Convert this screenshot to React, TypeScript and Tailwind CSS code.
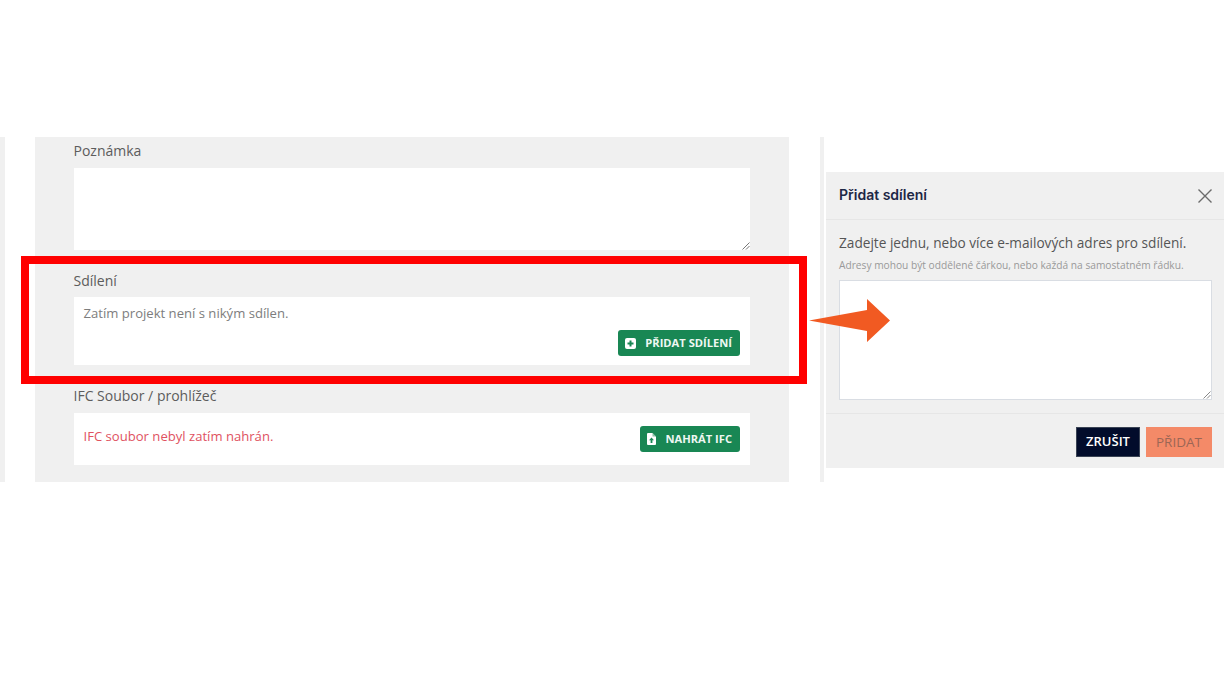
import React from "react";

function PlusIcon() {
  return (
    <svg width="11" height="11" viewBox="0 0 11 11" className="shrink-0">
      <rect width="11" height="11" rx="2" fill="#fff" />
      <path d="M5.5 2.5v6M2.5 5.5h6" stroke="#198754" strokeWidth="2" />
    </svg>
  );
}

function FileIcon() {
  return (
    <svg width="9" height="12" viewBox="0 0 9 12" className="shrink-0">
      <path d="M1 0h4.5L9 3.5V11a1 1 0 0 1-1 1H1a1 1 0 0 1-1-1V1a1 1 0 0 1 1-1z" fill="#fff" />
      <path d="M4.5 4.5L7 7.2H5.4V10H3.6V7.2H2z" fill="#198754" />
      <path d="M5.5 0v3.5H9z" fill="#198754" opacity="0.5" />
    </svg>
  );
}

function Label({ children, className }: { children: React.ReactNode; className: string }) {
  return <div className={`-ml-[0.5px] text-[14px] leading-5 text-[#5c5c5c] ${className}`}>{children}</div>;
}

function GreenButton({ icon, children }: { icon: React.ReactNode; children: React.ReactNode }) {
  return (
    <button className="flex h-[26px] items-center gap-[9px] rounded-[3px] bg-[#198754] pl-[7px] pr-[8px] text-[11.15px] font-bold text-[#eef7f2]">
      {icon}
      <span>{children}</span>
    </button>
  );
}

export default function App() {
  return (
    <div
      className="relative h-[689px] w-[1224px] overflow-hidden bg-white"
      style={{ fontFamily: '"Open Sans", "Noto Sans", sans-serif' }}
    >
      <div className="flex pt-[137px]">
        <div className="h-[345px] w-[5px] bg-[#f0f0f0]" />
        <div className="ml-[30px] h-[345px] w-[754px] bg-[#f0f0f0] px-[39px]">
          <Label className="mt-[4px] mb-[7px]">Poznámka</Label>
          <div className="relative h-[82px] bg-white">
            <svg width="8" height="8" viewBox="0 0 8 8" className="absolute right-0 bottom-0">
              <path d="M7.5 0.5L0.5 7.5M7.5 4L4 7.5" stroke="#777" strokeWidth="1" />
            </svg>
          </div>
          <Label className="mt-[21px] mb-[6px]">Sdílení</Label>
          <div className="flex h-[68px] flex-col bg-white pt-[6px] pr-[10px] pb-[9px] pl-[9.5px]">
            <div className="text-[13.1px] leading-5 text-[#7d7d7d]">Zatím projekt není s nikým sdílen.</div>
            <div className="mt-auto flex justify-end">
              <GreenButton icon={<PlusIcon />}>PŘIDAT SDÍLENÍ</GreenButton>
            </div>
          </div>
          <Label className="mt-[21px] mb-[7px]">IFC Soubor / prohlížeč</Label>
          <div className="flex h-[52px] items-start justify-between bg-white pt-[13px] pr-[10px] pl-[9.5px]">
            <div className="text-[13.1px] leading-5 text-[#e0525f]">IFC soubor nebyl zatím nahrán.</div>
            <GreenButton icon={<FileIcon />}>NAHRÁT IFC</GreenButton>
          </div>
        </div>
        <div className="ml-[31px] h-[345px] w-[4px] bg-[#f0f0f0]" />
        <div className="mt-[35px] ml-[2px] flex h-[296px] w-[398px] flex-col bg-[#f0f0f0]">
          <div className="flex h-[48px] shrink-0 items-center justify-between border-b border-[#e6e6e6] pr-[11px] pb-[3px] pl-[13px]">
            <span
              className="text-[14px] font-semibold text-[#1d2745]"
              style={{ fontFamily: 'Inter, "Open Sans", sans-serif' }}
            >
              Přidat sdílení
            </span>
            <svg width="16" height="16" viewBox="0 0 16 16" className="mt-[3px]">
              <path d="M1.5 1.5l13 13M14.5 1.5l-13 13" stroke="#6b6b6b" strokeWidth="1.4" />
            </svg>
          </div>
          <div className="flex flex-1 flex-col border-b border-[#e6e6e6] pr-[12px] pl-[13px]">
            <div className="mt-[13px] text-[13.65px] leading-5 text-[#555]">
              Zadejte jednu, nebo více e-mailových adres pro sdílení.
            </div>
            <div className="mt-[5px] text-[10.2px] leading-[14px] text-[#999]">
              Adresy mohou být oddělené čárkou, nebo každá na samostatném řádku.
            </div>
            <div className="relative mt-[8px] h-[120px] border border-[#d9dde3] bg-white">
              <svg width="8" height="8" viewBox="0 0 8 8" className="absolute right-0 bottom-0">
                <path d="M7.5 0.5L0.5 7.5M7.5 4L4 7.5" stroke="#888" strokeWidth="1" />
              </svg>
            </div>
          </div>
          <div className="flex h-[54px] shrink-0 items-center justify-end gap-[6px] pt-[2px] pr-[12px]">
            <button className="h-[30px] w-[64px] border border-[#3a4354] bg-[#020c2b] text-[13px] font-semibold text-white">
              ZRUŠIT
            </button>
            <button className="h-[30px] w-[66px] bg-[#f48a68] text-[13.5px] font-medium text-[#9c6655]">
              PŘIDAT
            </button>
          </div>
        </div>
      </div>

      <div className="absolute top-[256px] left-[21px] h-[128px] w-[786px] border-[8px] border-[#ff0000]" />
      <svg
        width="82"
        height="44"
        viewBox="0 0 82 44"
        className="absolute top-[299px] left-[809px]"
      >
        <path d="M0 21.5L58 11V0L81 21.5L58 43V32z" fill="#f15a22" />
      </svg>
    </div>
  );
}
